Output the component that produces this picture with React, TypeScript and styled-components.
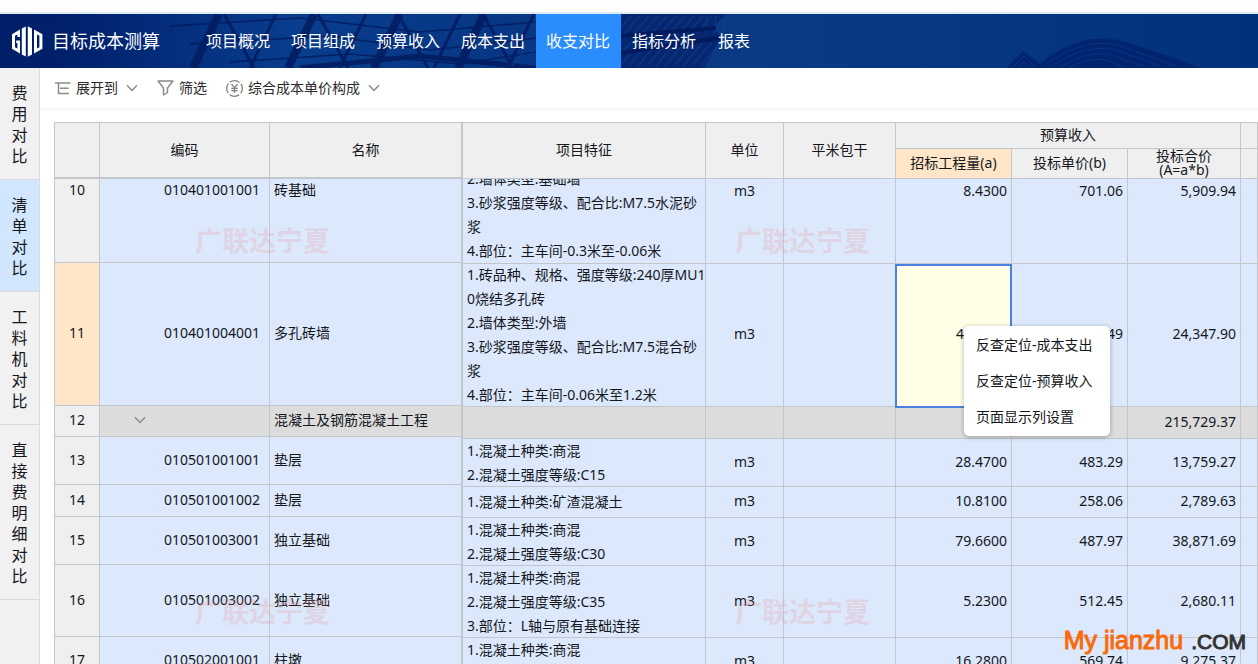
import React from "react";
import styled, { createGlobalStyle, css } from "styled-components";

const line = "#c3c6ca";
const headBg = "#efefef";
const cellBg = "#dce9fc";

const GlobalStyle = createGlobalStyle`
  *, *::before, *::after { box-sizing: border-box; }
  body {
    margin: 0;
    background: #fff;
    color: #15171c;
    font-family: "Noto Sans", "Noto Sans CJK SC", sans-serif;
    font-size: 14px;
  }
  button { font: inherit; color: inherit; border: 0; background: none; padding: 0; cursor: pointer; }
`;

const Page = styled.div`
  height: 100vh;
  min-width: 1200px;
  display: flex;
  flex-direction: column;
  overflow: hidden;
  position: relative;
`;

const TopStrip = styled.div`
  flex: none;
  height: 14px;
  background: #fdfdfd;
  border-bottom: 2px solid #dfeaf3;
`;

const Header = styled.header`
  flex: none;
  height: 54px;
  display: flex;
  align-items: stretch;
  position: relative;
  padding-left: 12px;
  color: #fff;
  background: linear-gradient(90deg, #001f69 0%, #00226f 16%, #0a3a83 58%, #083982 70%, #02317b 100%);
`;

const Skyline = styled.svg`
  position: absolute;
  left: 0;
  top: 0;
`;

const Brand = styled.div`
  position: relative;
  width: 184px;
  display: flex;
  align-items: center;
  gap: 9px;
  font-size: 18px;
  line-height: 26px;
`;

const Nav = styled.nav`
  position: relative;
  display: flex;
`;

const NavLink = styled.a<{ $active?: boolean }>`
  display: flex;
  align-items: center;
  padding: 0 11px 2px 10px;
  color: #fff;
  font-size: 16px;
  text-decoration: none;
  background: ${(p) => (p.$active ? "#2a8dfd" : "transparent")};
  &[aria-current] ~ & { padding-left: 11px; }
`;

const Main = styled.div`
  flex: 1;
  min-height: 0;
  display: flex;
`;

const Side = styled.aside`
  flex: none;
  width: 40px;
  background: #f1f1f1;
  border-right: 1px solid #dcdcdc;
  display: flex;
  flex-direction: column;
`;

const SideTab = styled.button<{ $active?: boolean }>`
  width: 100%;
  padding: 15px 11px 12px;
  border-bottom: 1px solid #dadada;
  background: ${(p) => (p.$active ? "#d0e7ff" : "transparent")};
  font-size: 16px;
  line-height: 21px;
  word-break: break-all;
`;

const Work = styled.main`
  flex: 1;
  min-width: 0;
  display: flex;
  flex-direction: column;
`;

const Toolbar = styled.div`
  flex: none;
  height: 42px;
  padding-left: 15px;
  display: flex;
  align-items: center;
  gap: 19px;
  border-bottom: 2px solid #f6f6f6;
`;

const Tool = styled.button`
  display: flex;
  align-items: center;
  gap: 5px;
  line-height: 20px;
  color: #2b2b2b;
`;

const DropArrow = styled.span`
  display: flex;
  margin-left: 3px;
`;

const Sheet = styled.section`
  position: relative;
  flex: 1;
  min-height: 0;
  margin: 12px 0 0 14px;
  display: flex;
  align-items: flex-start;
  overflow: hidden;
`;

const Grid = styled.table<{ $fixed?: boolean }>`
  table-layout: fixed;
  border-collapse: separate;
  border-spacing: 0;
  border-top: 1px solid ${line};
  ${(p) =>
    p.$fixed
      ? css`
          flex: none;
          width: 409px;
          border-left: 1px solid ${line};
        `
      : css`
          flex: 1;
          width: 0;
        `}
`;

const Th = styled.th<{ $hot?: boolean; $thick?: boolean; $edge?: boolean }>`
  padding: 0 0 1px;
  font-weight: 400;
  line-height: 14px;
  text-align: center;
  background: ${(p) => (p.$hot ? "#ffe6c8" : headBg)};
  border-right: ${(p) => (p.$edge ? 2 : 1)}px solid ${line};
  border-bottom: ${(p) => (p.$thick ? 2 : 1)}px solid ${line};
`;

const HeadRow = styled.tr<{ $h: number }>`
  height: ${(p) => p.$h}px;
`;

const Row = styled.tr<{ $h: number; $group?: boolean; $top?: boolean }>`
  height: ${(p) => p.$h}px;
  > td {
    background: ${(p) => (p.$group ? "#dcdcdc" : cellBg)};
    vertical-align: ${(p) => (p.$top ? "top" : "middle")};
  }
`;

const Td = styled.td<{ $align?: "left" | "right" | "center"; $pad?: number }>`
  padding: 0 ${(p) => p.$pad ?? 4}px 2px 4px;
  line-height: 24px;
  white-space: nowrap;
  text-align: ${(p) => p.$align ?? "left"};
  border-right: 1px solid ${line};
  border-bottom: 1px solid ${line};
`;

const PinnedTd = styled(Td)<{ $edge?: boolean }>`
  line-height: 22px;
  border-right-width: ${(p) => (p.$edge ? 2 : 1)}px;
`;

const RowNo = styled.th<{ $hot?: boolean; $top?: boolean }>`
  padding: 0 0 2px;
  font-weight: 400;
  line-height: 22px;
  vertical-align: ${(p) => (p.$top ? "top" : "middle")};
  background: ${(p) => (p.$hot ? "#ffe6c8" : headBg)};
  border-right: 1px solid ${line};
  border-bottom: 1px solid ${line};
`;

const FeatureTd = styled(Td)`
  padding: 0 0 0 4px;
`;

const Feature = styled.div<{ $h: number; $place: "center" | "flex-start" | "flex-end" }>`
  height: ${(p) => p.$h}px;
  display: flex;
  flex-direction: column;
  justify-content: ${(p) => p.$place};
  overflow: hidden;
  white-space: pre;
`;

const SelectedTd = styled(Td)`
  position: relative;
  && { background: #ffffe8; }
  &::after {
    content: "";
    position: absolute;
    inset: 0 -1px -2px -1px;
    border: 2px solid #4a80e0;
    z-index: 1;
  }
`;

const Twisty = styled.button`
  display: flex;
  margin-left: 30px;
`;

const Stamps = styled.div`
  position: absolute;
  left: 141px;
  top: 104px;
  display: grid;
  grid-template-columns: 540px 540px;
  grid-template-rows: 371px 371px;
  pointer-events: none;
  color: rgba(232, 150, 155, 0.26);
  font-size: 27px;
  font-weight: 700;
  line-height: 30px;
  z-index: 1;
`;

const Menu = styled.div`
  position: absolute;
  left: 964px;
  top: 326px;
  width: 146px;
  z-index: 3;
  padding: 1px 0;
  display: flex;
  flex-direction: column;
  background: #fff;
  border-radius: 5px;
  box-shadow: 0 1px 5px rgba(0, 0, 0, 0.3);
`;

const MenuItem = styled.button`
  height: 36px;
  padding: 0 12px;
  text-align: left;
  line-height: 20px;
`;

const SiteMark = styled.div`
  position: absolute;
  right: 12px;
  bottom: 8px;
  z-index: 2;
  display: flex;
  align-items: baseline;
  gap: 8px;
  font-family: "Liberation Sans", Arial, sans-serif;
  line-height: 28px;
`;

const MarkName = styled.span`
  font-size: 25px;
  color: #fa6a0a;
  -webkit-text-stroke: 1px #fa6a0a;
`;

const MarkCom = styled.span`
  font-size: 21px;
  color: #333;
  -webkit-text-stroke: 1px #333;
`;

const Chevron = () => (
  <svg width="12" height="8" viewBox="0 0 12 8" fill="none" stroke="#8a8a8a" strokeWidth="1.4" aria-hidden="true">
    <path d="M1 1.2 6 6.4 11 1.2" />
  </svg>
);

const Logo = () => (
  <svg width="31" height="31" viewBox="0 0 31 31" fill="#fff" aria-hidden="true">
    <path d="M0 8.2 8 3.6V11H5.4V8.4L3 9.8V21.2L5.4 22.6V17H4.2V14.4H8V27.4L0 22.8Z" />
    <path d="M9.8 2.6 13.8.6V30.4L9.8 28.4Z" />
    <path d="M15.8.2 20 2.6V28.4L15.8 30.8Z" />
    <path fillRule="evenodd" d="M22 3.6 30.4 8.2V22.8L22 27.4ZM25 8.4V22.6L27.4 21.2V9.8Z" />
  </svg>
);

const beams = [205, 238, 262, 300, 332, 352, 386, 412, 446, 470, 497, 520];
const ribs = Array.from({ length: 22 }, (_, i) => 536 + i * 9);

const Backdrop = () => (
  <Skyline width="1258" height="54" viewBox="0 0 1258 54" aria-hidden="true">
    <defs>
      <linearGradient id="glass" x1="0" x2="1" y1="0" y2="0">
        <stop offset="0" stopColor="#0b4596" stopOpacity="0" />
        <stop offset="0.5" stopColor="#0b4596" stopOpacity="0.75" />
        <stop offset="1" stopColor="#0b4596" stopOpacity="0.3" />
      </linearGradient>
    </defs>
    <rect x="60" width="480" height="54" fill="url(#glass)" />
    <path d="M536 0H726L712 14 722 22 704 54H536Z" fill="#06226a" opacity="0.75" />
    <g stroke="#021a5e" fill="none" opacity="0.8">
      {beams.map((x, i) => (
        <path key={x} d={i % 3 === 1 ? `M${x - 14} 0 ${x + 16} 54` : `M${x + 14} 0 ${x - 12} 54`} strokeWidth={i % 3 === 0 ? 8 : 3} />
      ))}
      <path d="M170 12 300 4 420 18 536 8M190 30 330 22 430 36 536 24M230 48 350 40 460 50 536 38" strokeWidth="1.5" />
      <path d="M300 54 420 42 536 54" strokeWidth="5" />
    </g>
    <g stroke="#0c4090" strokeWidth="1.5" opacity="0.6">
      {ribs.map((x) => (
        <path key={x} d={`M${x < 700 ? x + 14 : x} 2 ${x - 2} 20M${x - 4} 28 ${x - 24} 52`} />
      ))}
    </g>
    <path d="M536 24 620 22 716 14M536 54 640 36 720 24" stroke="#021a5e" strokeWidth="4" fill="none" />
    <path d="M1006 54 1023 37 1040 50C1064 28 1098 20 1122 27 1150 35 1178 46 1200 54Z" fill="#01246f" />
    <g stroke="#0a3f8b" fill="none" opacity="0.7">
      <path d="M1012 54 1024 42 1036 54M1018 54 1024 48 1031 54" />
      <path d="M1044 52C1070 32 1096 26 1118 31L1176 52" />
      <path d="M1052 52C1076 36 1096 32 1116 36L1160 52" />
      <path d="M1060 53C1080 41 1096 38 1112 41L1142 52" />
      <path d="M1070 53C1084 46 1096 44 1106 46L1124 53" />
    </g>
  </Skyline>
);

const navItems = ["项目概况", "项目组成", "预算收入", "成本支出", "收支对比", "指标分析", "报表"];
const sideItems = ["费用对比", "清单对比", "工料机对比", "直接费明细对比"];

type Item = {
  no: number;
  code?: string;
  name: string;
  lines: string[];
  unit?: string;
  qty?: string;
  price?: string;
  total: string;
  hl: number;
  hr: number;
};

const items: Item[] = [
  {
    no: 10, code: "010401001001", name: "砖基础",
    lines: ["2.墙体类型:基础墙", "3.砂浆强度等级、配合比:M7.5水泥砂", "浆", "4.部位：主车间-0.3米至-0.06米"],
    unit: "m3", qty: "8.4300", price: "701.06", total: "5,909.94", hl: 84, hr: 85,
  },
  {
    no: 11, code: "010401004001", name: "多孔砖墙",
    lines: ["1.砖品种、规格、强度等级:240厚MU1", "0烧结多孔砖", "2.墙体类型:外墙", "3.砂浆强度等级、配合比:M7.5混合砂", "浆", "4.部位：主车间-0.06米至1.2米"],
    unit: "m3", qty: "4", price: "49", total: "24,347.90", hl: 143, hr: 143,
  },
  { no: 12, name: "混凝土及钢筋混凝土工程", lines: [], total: "215,729.37", hl: 31, hr: 32 },
  { no: 13, code: "010501001001", name: "垫层", lines: ["1.混凝土种类:商混", "2.混凝土强度等级:C15"], unit: "m3", qty: "28.4700", price: "483.29", total: "13,759.27", hl: 48, hr: 48 },
  { no: 14, code: "010501001002", name: "垫层", lines: ["1.混凝土种类:矿渣混凝土"], unit: "m3", qty: "10.8100", price: "258.06", total: "2,789.63", hl: 32, hr: 31 },
  { no: 15, code: "010501003001", name: "独立基础", lines: ["1.混凝土种类:商混", "2.混凝土强度等级:C30"], unit: "m3", qty: "79.6600", price: "487.97", total: "38,871.69", hl: 48, hr: 48 },
  { no: 16, code: "010501003002", name: "独立基础", lines: ["1.混凝土种类:商混", "2.混凝土强度等级:C35", "3.部位：L轴与原有基础连接"], unit: "m3", qty: "5.2300", price: "512.45", total: "2,680.11", hl: 72, hr: 72 },
  { no: 17, code: "010502001001", name: "柱墩", lines: ["1.混凝土种类:商混"], unit: "m3", qty: "16.2800", price: "569.74", total: "9,275.37", hl: 48, hr: 48 },
];

const Qty = styled.span<{ $shift?: boolean }>`
  padding-right: ${(p) => (p.$shift ? 43 : 0)}px;
`;

const placeOf = (no: number) => (no === 10 ? "flex-end" : no === 17 ? "flex-start" : "center");

export default function App() {
  return (
    <Page>
      <GlobalStyle />
      <TopStrip />
      <Header>
        <Backdrop />
        <Brand>
          <Logo />
          目标成本测算
        </Brand>
        <Nav>
          {navItems.map((t) => {
            const active = t === "收支对比";
            return (
              <NavLink key={t} href="#" $active={active} aria-current={active ? "page" : undefined}>{t}</NavLink>
            );
          })}
        </Nav>
      </Header>
      <Main>
        <Side>
          {sideItems.map((t) => (
            <SideTab key={t} $active={t === "清单对比"}>{t}</SideTab>
          ))}
        </Side>
        <Work>
          <Toolbar>
            <Tool>
              <svg width="16" height="14" viewBox="0 0 16 14" fill="none" stroke="#8a8a8a" strokeWidth="1.5" aria-hidden="true">
                <path d="M0 2H15.500M3.500 2V12.500H14M5 7.250H13.500" />
              </svg>
              展开到
              <DropArrow><Chevron /></DropArrow>
            </Tool>
            <Tool>
              <svg width="17" height="16" viewBox="0 0 17 16" fill="none" stroke="#8a8a8a" strokeWidth="1.4" strokeLinejoin="round" aria-hidden="true">
                <path d="M1 1H16L10.500 8V12.500L6.500 15V8Z" />
              </svg>
              筛选
            </Tool>
            <Tool>
              <svg width="17" height="17" viewBox="0 0 17 17" fill="none" stroke="#808080" strokeWidth="1.3" aria-hidden="true">
                <circle cx="8.500" cy="8.500" r="7.800" strokeDasharray="10.250 2" strokeDashoffset="5.100" />
                <path d="M5.500 4 8.500 7.800 11.500 4M8.500 7.800V13M5.300 8.300H11.700M5.300 10.600H11.700" />
              </svg>
              综合成本单价构成
              <DropArrow><Chevron /></DropArrow>
            </Tool>
          </Toolbar>
          <Sheet>
            <Grid $fixed>
              <colgroup>
                <col style={{ width: 45 }} />
                <col style={{ width: 170 }} />
                <col style={{ width: 193 }} />
              </colgroup>
              <thead>
                <HeadRow $h={56}>
                  <Th $thick />
                  <Th $thick>编码</Th>
                  <Th $thick $edge>名称</Th>
                </HeadRow>
              </thead>
              <tbody>
                {items.map((it) => (
                  <Row key={it.no} $h={it.hl} $group={!it.code} $top={it.no === 10}>
                    <RowNo scope="row" $hot={it.no === 11} $top={it.no === 10}>{it.no}</RowNo>
                    <PinnedTd $align={it.code ? "right" : "left"} $pad={9}>
                      {it.code ?? <Twisty aria-label="折叠"><Chevron /></Twisty>}
                    </PinnedTd>
                    <PinnedTd $edge>{it.name}</PinnedTd>
                  </Row>
                ))}
              </tbody>
            </Grid>
            <Grid>
              <colgroup>
                <col style={{ width: 243 }} />
                <col style={{ width: 78 }} />
                <col style={{ width: 112 }} />
                <col style={{ width: 116 }} />
                <col style={{ width: 116 }} />
                <col style={{ width: 113 }} />
                <col />
              </colgroup>
              <thead>
                <HeadRow $h={26}>
                  <Th rowSpan={2}>项目特征</Th>
                  <Th rowSpan={2}>单位</Th>
                  <Th rowSpan={2}>平米包干</Th>
                  <Th colSpan={3}>预算收入</Th>
                  <Th />
                </HeadRow>
                <HeadRow $h={30}>
                  <Th $hot>招标工程量(a)</Th>
                  <Th>投标单价(b)</Th>
                  <Th>投标合价<br />(A=a*b)</Th>
                  <Th />
                </HeadRow>
              </thead>
              <tbody>
                {items.map((it) => {
                  const QtyCell = it.no === 11 ? SelectedTd : Td;
                  return (
                    <Row key={it.no} $h={it.hr} $group={!it.code} $top={it.no === 10}>
                      <FeatureTd>
                        <Feature $h={it.hr - 1} $place={placeOf(it.no)}>
                          {it.lines.map((l) => <div key={l}>{l}</div>)}
                        </Feature>
                      </FeatureTd>
                      <Td $align="center">{it.unit}</Td>
                      <Td />
                      <QtyCell $align="right"><Qty $shift={it.no === 11}>{it.qty}</Qty></QtyCell>
                      <Td $align="right">{it.price}</Td>
                      <Td $align="right">{it.total}</Td>
                      <Td />
                    </Row>
                  );
                })}
              </tbody>
            </Grid>
            <Stamps aria-hidden="true">
              <span>广联达宁夏</span>
              <span>广联达宁夏</span>
              <span>广联达宁夏</span>
              <span>广联达宁夏</span>
            </Stamps>
          </Sheet>
        </Work>
      </Main>
      <Menu role="menu">
        <MenuItem role="menuitem">反查定位-成本支出</MenuItem>
        <MenuItem role="menuitem">反查定位-预算收入</MenuItem>
        <MenuItem role="menuitem">页面显示列设置</MenuItem>
      </Menu>
      <SiteMark>
        <MarkName>My jianzhu</MarkName>
        <MarkCom>.COM</MarkCom>
      </SiteMark>
    </Page>
  );
}
